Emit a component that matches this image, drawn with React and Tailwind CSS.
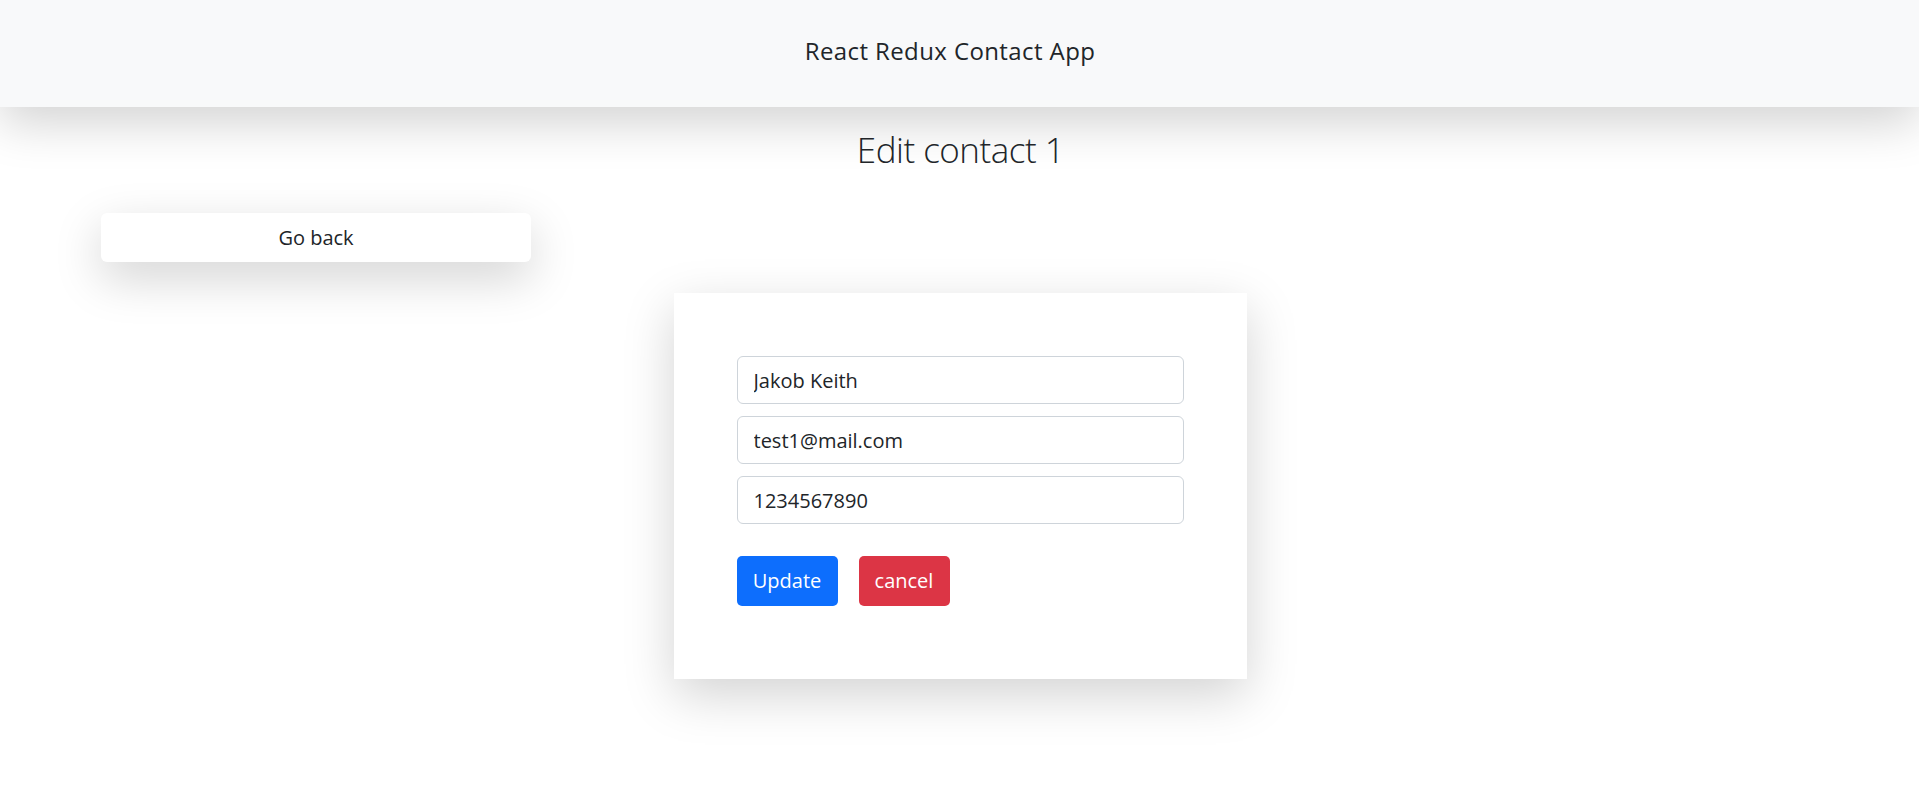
import React from "react";

export default function App() {
  const font = { fontFamily: '"Open Sans", "Noto Sans", sans-serif' };
  return (
    <div className="min-h-screen bg-white text-[#212529]" style={font}>
      <header className="h-[107px] bg-[#f8f9fa] shadow-[0_1rem_3rem_rgba(0,0,0,0.175)] flex items-center justify-center pr-[19px] pb-[5px]">
        <h1 className="text-[24px] leading-[36px] font-normal tracking-[0.4px]">React Redux Contact App</h1>
      </header>
      <h2 className="mt-[22px] text-center text-[35px] leading-[42px] font-light tracking-[-0.5px] pl-[2px]">Edit contact 1</h2>
      <div className="pl-[101px] mt-[42px]">
        <button className="w-[430px] h-[49px] bg-white rounded-[6px] shadow-[0_1rem_3rem_rgba(0,0,0,0.175)] text-[20px] text-[#212529]">
          Go back
        </button>
      </div>
      <div className="flex justify-center mt-[31px] pl-[1px]">
        <div className="w-[573px] h-[386px] bg-white shadow-[0_1rem_3rem_rgba(0,0,0,0.175)] pt-[63px] px-[63px]">
          <form className="flex flex-col gap-[12px]">
            <input
              className="h-[48px] w-full border border-[#ced4da] rounded-[6px] px-[16px] text-[20px] text-[#212529] outline-none"
              defaultValue="Jakob Keith"
            />
            <input
              className="h-[48px] w-full border border-[#ced4da] rounded-[6px] px-[16px] text-[20px] text-[#212529] outline-none"
              defaultValue="test1@mail.com"
            />
            <input
              className="h-[48px] w-full border border-[#ced4da] rounded-[6px] px-[16px] text-[20px] text-[#212529] outline-none"
              defaultValue="1234567890"
            />
            <div className="flex gap-[21px] mt-[20px]">
              <button type="button" className="h-[50px] w-[101px] bg-[#0d6efd] text-white rounded-[5px] text-[20px]">
                Update
              </button>
              <button type="button" className="h-[50px] w-[91px] bg-[#dc3545] text-white rounded-[5px] text-[20px]">
                cancel
              </button>
            </div>
          </form>
        </div>
      </div>
    </div>
  );
}
